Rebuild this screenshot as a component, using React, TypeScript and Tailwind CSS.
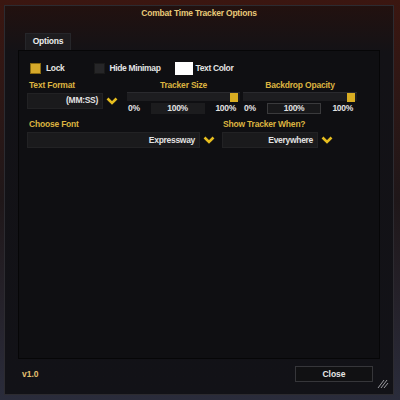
import React from "react";

const font = "font-['Liberation_Sans',Arial,sans-serif]";

function Chevron() {
  return (
    <svg width="12" height="8" viewBox="0 0 12 8" className="shrink-0">
      <polyline points="1.5,1.5 6,6 10.5,1.5" fill="none" stroke="#e6bd1f" strokeWidth="2.6" strokeLinejoin="miter" />
    </svg>
  );
}

function Dropdown({ width, value }: { width: string; value: string }) {
  return (
    <div className="flex items-center gap-[3px]">
      <div className={`${width} h-[16px] bg-[#1a1a1c] border border-[#222224] flex items-center justify-end pr-[4px] text-[#e2e2e2] text-[8.5px] tracking-[-0.3px] font-bold`}>
        {value}
      </div>
      <Chevron />
    </div>
  );
}

function Slider({ label, boxed }: { label: string; boxed?: boolean }) {
  return (
    <div className="flex flex-col">
      <div className="text-center text-[#dcb440] text-[8.5px] tracking-[-0.2px] font-bold h-[12px] leading-[12px]">{label}</div>
      <div className="mt-[1px] h-[9px] bg-[#1d1d20] border-t border-[#2a2a2e] flex justify-end pr-[2px]">
        <div className="w-[8px] h-[9px] bg-[#d9ad22]" />
      </div>
      <div className="mt-[1px] flex items-center justify-between text-[#e2e2e2] text-[8.5px] tracking-[-0.3px] font-bold">
        <span className="pl-[1px]">0%</span>
        <div className={`w-[54px] h-[11px] flex items-center justify-center ${boxed ? "border border-[#3a3a3c] bg-[#18181a]" : "bg-[#1c1c1e]"}`}>100%</div>
        <span className="pr-[4px]">100%</span>
      </div>
    </div>
  );
}

export default function App() {
  return (
    <div className={`w-[400px] h-[400px] bg-gradient-to-b from-[#3b1610] via-[#1f1719] to-[#2a2c3b] pl-[4px] pr-[6px] pt-[5px] pb-[5px] ${font}`}>
      <div className="h-full flex flex-col border border-[#2c2b30] bg-gradient-to-b from-[#22110f] via-[#131216] via-[12%] to-[#121217]">
        <div className="h-[18px] text-center text-[#e8c978] text-[8.5px] tracking-[-0.2px] font-bold leading-[14px]">
          Combat Time Tracker Options
        </div>
        <div className="h-[26px] flex items-end pl-[20px]">
          <div className="w-[46px] h-[17px] bg-[#1d1c1f] border-t border-x border-[#26262a] flex items-center justify-center text-[#ececec] text-[8.5px] tracking-[-0.2px] font-bold">
            Options
          </div>
        </div>
        <div className="ml-[13px] w-[362px] h-[312px] border border-[#060607] bg-[#0f0f12] flex flex-col">
          <div className="pt-[10px] pl-[11px] h-[26px] flex items-center text-[#e4e4e4] text-[8.5px] tracking-[-0.35px] font-bold">
            <div className="w-[11px] h-[11px] bg-[#d6a92a] border border-[#8a6a10]" />
            <span className="ml-[5px]">Lock</span>
            <div className="ml-[30px] w-[11px] h-[11px] bg-[#262628] border border-[#1a1a1a]" />
            <span className="ml-[4px]">Hide Minimap</span>
            <div className="ml-[14px] w-[18px] h-[13px] bg-white" />
            <span className="ml-[3px]">Text Color</span>
          </div>
          <div className="mt-[2px] pl-[8px] flex items-start">
            <div className="w-[91px] flex flex-col">
              <div className="text-[#dcb440] text-[8.5px] tracking-[-0.2px] font-bold h-[12px] leading-[12px] pl-[2px]">Text Format</div>
              <div className="mt-[2px]">
                <Dropdown width="w-[76px]" value="(MM:SS)" />
              </div>
            </div>
            <div className="ml-[9px] w-[113px]">
              <Slider label="Tracker Size" />
            </div>
            <div className="ml-[3px] w-[114px]">
              <Slider label="Backdrop Opacity" boxed />
            </div>
          </div>
          <div className="mt-[4px] pl-[8px] flex items-start">
            <div className="w-[195px] flex flex-col">
              <div className="text-[#dcb440] text-[8.5px] tracking-[-0.2px] font-bold h-[12px] leading-[12px] pl-[2px]">Choose Font</div>
              <div className="mt-[2px]">
                <Dropdown width="w-[173px]" value="Expressway" />
              </div>
            </div>
            <div className="flex flex-col">
              <div className="text-[#dcb440] text-[8.5px] tracking-[-0.2px] font-bold h-[12px] leading-[12px] pl-[1px]">Show Tracker When?</div>
              <div className="mt-[2px]">
                <Dropdown width="w-[96px]" value="Everywhere" />
              </div>
            </div>
          </div>
        </div>
        <div className="flex-1 flex items-center pl-[17px] pr-[4px] pb-[5px]">
          <span className="text-[#e3c070] text-[8.5px] font-bold">v1.0</span>
          <div className="ml-auto w-[78px] h-[16px] bg-[#111113] border border-[#36363a] flex items-center justify-center text-[#e8e8e8] text-[8.5px] font-bold">
            Close
          </div>
          <div className="ml-[4px] mt-[18px] w-[12px] h-[12px]">
            <svg width="12" height="12" viewBox="0 0 12 12">
              <line x1="1" y1="11" x2="7" y2="3" stroke="#9a9aa0" strokeWidth="1" />
              <line x1="4" y1="11" x2="10" y2="3" stroke="#9a9aa0" strokeWidth="1" />
              <line x1="7" y1="11" x2="11" y2="6" stroke="#9a9aa0" strokeWidth="1" />
            </svg>
          </div>
        </div>
      </div>
    </div>
  );
}
